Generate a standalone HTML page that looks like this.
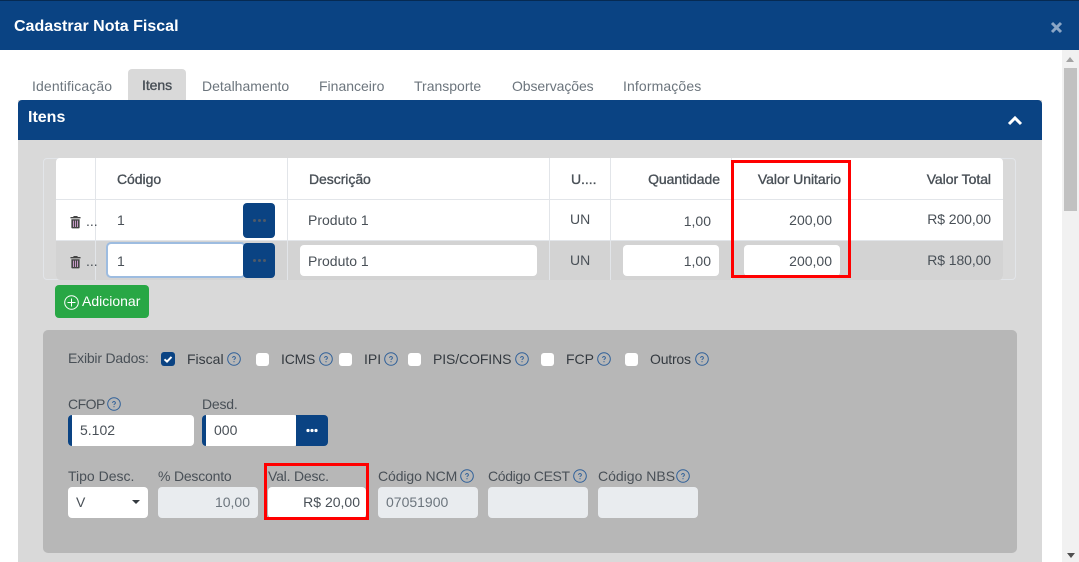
<!DOCTYPE html>
<html><head><meta charset="utf-8">
<style>
html,body{margin:0;padding:0;background:#fff;}
body{width:1079px;height:562px;overflow:hidden;position:relative;font-family:"Liberation Sans",sans-serif;font-size:14px;color:#495057;}
.a{position:absolute;}
.t{position:absolute;white-space:nowrap;line-height:18px;}
.r{text-align:right;}
.b{font-weight:bold;}
.m{-webkit-text-stroke:.35px currentColor;letter-spacing:-.05px;}
.l{letter-spacing:-.2px;}
.tb{letter-spacing:.12px;}
.inp{position:absolute;background:#fff;border-radius:4px;box-sizing:border-box;}
.dis{position:absolute;background:#e9ecef;border-radius:4px;}
.h{position:absolute;width:14px;height:14px;}
.cb{position:absolute;width:13px;height:13px;background:#fff;border-radius:3px;top:353px;}
.vl{position:absolute;width:1px;background:#e2e5e9;top:158px;height:122px;}
.dots{position:absolute;width:32px;height:35px;background:#0a4383;border-radius:4px;}
.dots i{position:absolute;top:16px;width:3px;height:3px;border-radius:50%;background:#4f5a68;}
.bl{position:absolute;width:4px;height:31px;background:#0a4383;border-radius:4px 0 0 4px;}
.rb{position:absolute;border:3px solid #f00;box-sizing:border-box;}
</style></head><body>
<svg width="0" height="0" style="position:absolute"><defs>
<symbol id="q" viewBox="0 0 14 14"><circle cx="7" cy="7" r="6.300" fill="none" stroke="#2f6099" stroke-width="1"/><path d="M5.600 5.900a1.400 1.300 0 1 1 2.200 1c-.5.300-.8.500-.8 1" fill="none" stroke="#2f6099" stroke-width="1"/><circle cx="7" cy="9.700" r=".6" fill="#2f6099"/></symbol>
<symbol id="tr" viewBox="0 0 12 14"><path d="M4 .5h4l.5 1H11.500v1.500H.5V1.500h3z" fill="#444"/><path d="M1.500 4h9v9a1 1 0 0 1-1 1h-7a1 1 0 0 1-1-1z" fill="#444"/><path d="M3.800 5.500v7M6 5.500v7M8.200 5.500v7" stroke="#c79ac7" stroke-width="1.100"/></symbol>
</defs></svg>

<!-- Header -->
<div class="a" style="left:0;top:0;width:1079px;height:50px;background:#0a4383;border-top:1px solid #062a52;box-sizing:border-box;"></div>
<div class="t b" style="left:14px;top:18px;color:#fff;font-size:16px;">Cadastrar Nota Fiscal</div>
<svg class="a" style="left:1050px;top:21px" width="13" height="13" viewBox="0 0 13 13"><path d="M2 2l9 9M11 2l-9 9" stroke="#8ba6c6" stroke-width="3"/></svg>

<!-- Scrollbar -->
<div class="a" style="left:1062px;top:50px;width:17px;height:512px;background:#f1f1f1;"></div>
<div class="a" style="left:1064px;top:68px;width:13px;height:143px;background:#c1c1c1;"></div>
<div class="a" style="left:1066px;top:57px;width:0;height:0;border:4px solid transparent;border-top:0;border-bottom:5px solid #a3a3a3;"></div>
<div class="a" style="left:1067px;top:553px;width:0;height:0;border:4px solid transparent;border-bottom:0;border-top:5px solid #505050;"></div>

<!-- Tabs -->
<div class="a" style="left:128px;top:69px;width:58px;height:31px;background:#d9d9d9;border-radius:4px 4px 0 0;"></div>
<div class="t tb" style="left:32px;top:77px;color:#6c757d;">Identificação</div>
<div class="t m" style="left:142px;top:76px;color:#495057;">Itens</div>
<div class="t" style="left:202px;top:77px;color:#6c757d;">Detalhamento</div>
<div class="t" style="left:319px;top:77px;color:#6c757d;">Financeiro</div>
<div class="t" style="left:414px;top:77px;color:#6c757d;">Transporte</div>
<div class="t" style="left:512px;top:77px;color:#6c757d;letter-spacing:-.08px;">Observações</div>
<div class="t tb" style="left:623px;top:77px;color:#6c757d;">Informações</div>

<!-- Panel -->
<div class="a" style="left:18px;top:100px;width:1024px;height:462px;background:#d9d9d9;"></div>
<div class="a" style="left:18px;top:100px;width:1024px;height:40px;background:#0a4383;border-radius:4px 4px 0 0;"></div>
<div class="t b" style="left:28px;top:109px;color:#fff;font-size:16px;">Itens</div>
<svg class="a" style="left:1007px;top:114px" width="16" height="12" viewBox="0 0 16 12"><path d="M2 10l6-6 6 6" fill="none" stroke="#fff" stroke-width="3"/></svg>

<!-- Table -->
<div class="a" style="left:43px;top:158px;width:973px;height:122px;border:1px solid #e2e5e9;border-radius:4px;box-sizing:border-box;"></div>
<div class="a" style="left:56px;top:158px;width:947px;height:122px;background:#fff;border-radius:4px;"></div>
<div class="a" style="left:56px;top:241px;width:947px;height:39px;background:#d3d3d3;border-radius:0 0 4px 4px;"></div>
<div class="a" style="left:56px;top:199px;width:947px;height:1px;background:#e2e5e9;"></div>
<div class="a" style="left:56px;top:240px;width:947px;height:1px;background:#e2e5e9;"></div>
<div class="vl" style="left:95px"></div>
<div class="vl" style="left:287px"></div>
<div class="vl" style="left:549px"></div>
<div class="vl" style="left:610px"></div>
<div class="vl" style="left:731px"></div>

<div class="t m" style="left:117px;top:170px;">Código</div>
<div class="t m" style="left:309px;top:170px;">Descrição</div>
<div class="t m" style="left:571px;top:170px;">U....</div>
<div class="t m r" style="right:359px;top:170px;">Quantidade</div>
<div class="t m r" style="right:238px;top:170px;">Valor Unitario</div>
<div class="t m r" style="right:88px;top:170px;">Valor Total</div>

<svg class="a" style="left:70px;top:215px" width="11" height="14"><use href="#tr"/></svg>
<svg class="a" style="left:70px;top:255px" width="11" height="14"><use href="#tr"/></svg>
<div class="t" style="left:86px;top:212px;">...</div>
<div class="t" style="left:86px;top:252px;">...</div>

<div class="t" style="left:117px;top:211px;">1</div>
<div class="dots" style="left:243px;top:203px"><i style="left:10px"></i><i style="left:15px"></i><i style="left:20px"></i></div>
<div class="t" style="left:308px;top:211px;">Produto 1</div>
<div class="t" style="left:570px;top:210px;">UN</div>
<div class="t r" style="right:368px;top:212px;">1,00</div>
<div class="t r" style="right:247px;top:211px;">200,00</div>
<div class="t r" style="right:88px;top:210px;letter-spacing:-.1px;">R$ 200,00</div>

<div class="inp" style="left:106px;top:242px;width:140px;height:36px;border:2px solid #9dbce0;border-radius:5px;"></div>
<div class="t" style="left:117px;top:252px;">1</div>
<div class="dots" style="left:243px;top:243px"><i style="left:10px"></i><i style="left:15px"></i><i style="left:20px"></i></div>
<div class="inp" style="left:300px;top:245px;width:237px;height:31px;"></div>
<div class="t" style="left:308px;top:252px;">Produto 1</div>
<div class="t" style="left:570px;top:251px;">UN</div>
<div class="inp" style="left:623px;top:245px;width:96px;height:31px;"></div>
<div class="t r" style="right:368px;top:252px;">1,00</div>
<div class="inp" style="left:744px;top:245px;width:96px;height:31px;"></div>
<div class="t r" style="right:247px;top:252px;">200,00</div>
<div class="t r" style="right:88px;top:251px;letter-spacing:-.1px;">R$ 180,00</div>

<div class="rb" style="left:731px;top:160px;width:120px;height:118px;"></div>

<!-- Add button -->
<div class="a" style="left:55px;top:285px;width:94px;height:33px;background:#28a745;border-radius:4px;"></div>
<svg class="a" style="left:64px;top:295px" width="15" height="15" viewBox="0 0 15 15"><circle cx="7.500" cy="7.500" r="6.800" fill="none" stroke="#fff"/><path d="M7.500 3.500v8M3.500 7.500h8" stroke="#fff"/></svg>
<div class="t" style="left:82px;top:292px;color:#fff;">Adicionar</div>

<!-- Gray section -->
<div class="a" style="left:43px;top:330px;width:974px;height:223px;background:#b7b7b7;border-radius:5px;"></div>
<div class="t l" style="left:68px;top:349px;">Exibir Dados:</div>
<div class="cb" style="left:161px;top:352px;width:14px;height:14px;background:#0a4383;"></div>
<svg class="a" style="left:161px;top:352px" width="14" height="14" viewBox="0 0 14 14"><path d="M3.500 7.300l2.500 2.300 4.500-4.700" fill="none" stroke="#fff" stroke-width="2"/></svg>
<div class="t" style="left:187px;top:350px;color:#343a40;">Fiscal</div>
<svg class="h" style="left:227px;top:352px"><use href="#q"/></svg>
<div class="cb" style="left:256px"></div>
<div class="t l" style="left:281px;top:350px;color:#343a40;">ICMS</div>
<svg class="h" style="left:319px;top:352px"><use href="#q"/></svg>
<div class="cb" style="left:339px"></div>
<div class="t" style="left:364px;top:350px;color:#343a40;">IPI</div>
<svg class="h" style="left:384px;top:352px"><use href="#q"/></svg>
<div class="cb" style="left:408px"></div>
<div class="t" style="left:433px;top:350px;color:#343a40;letter-spacing:-.1px;">PIS/COFINS</div>
<svg class="h" style="left:515px;top:352px"><use href="#q"/></svg>
<div class="cb" style="left:541px"></div>
<div class="t" style="left:566px;top:350px;color:#343a40;">FCP</div>
<svg class="h" style="left:597px;top:352px"><use href="#q"/></svg>
<div class="cb" style="left:625px"></div>
<div class="t l" style="left:650px;top:350px;color:#343a40;">Outros</div>
<svg class="h" style="left:695px;top:352px"><use href="#q"/></svg>

<div class="t" style="left:68px;top:395px;letter-spacing:-.5px;">CFOP</div>
<svg class="h" style="left:107px;top:397px"><use href="#q"/></svg>
<div class="inp" style="left:68px;top:415px;width:126px;height:31px;"></div>
<div class="bl" style="left:68px;top:415px"></div>
<div class="t" style="left:80px;top:421px;">5.102</div>

<div class="t l" style="left:202px;top:395px;">Desd.</div>
<div class="inp" style="left:202px;top:415px;width:96px;height:31px;"></div>
<div class="bl" style="left:202px;top:415px"></div>
<div class="t" style="left:214px;top:421px;">000</div>
<div class="a" style="left:296px;top:415px;width:32px;height:31px;background:#0a4383;border-radius:0 4px 4px 0;"></div>
<svg class="a" style="left:306px;top:428px" width="12" height="5"><circle cx="2" cy="2.500" r="1.600" fill="#fff"/><circle cx="6" cy="2.500" r="1.600" fill="#fff"/><circle cx="10" cy="2.500" r="1.600" fill="#fff"/></svg>

<div class="t" style="left:68px;top:467px;">Tipo Desc.</div>
<div class="inp" style="left:68px;top:487px;width:80px;height:31px;"></div>
<div class="t" style="left:76px;top:493px;">V</div>
<div class="a" style="left:132px;top:500px;width:0;height:0;border:4px solid transparent;border-bottom:0;border-top:4px solid #343a40;"></div>

<div class="t l" style="left:158px;top:467px;">% Desconto</div>
<div class="dis" style="left:158px;top:487px;width:100px;height:31px;"></div>
<div class="t r" style="right:829px;top:493px;color:#6c757d;">10,00</div>

<div class="inp" style="left:268px;top:487px;width:98px;height:31px;"></div>
<div class="t l" style="left:268px;top:467px;">Val. Desc.</div>
<div class="t r" style="right:719px;top:493px;">R$ 20,00</div>
<div class="rb" style="left:264px;top:463px;width:105px;height:57px;"></div>

<div class="t" style="left:378px;top:467px;letter-spacing:-.1px;">Código NCM</div>
<svg class="h" style="left:460px;top:469px"><use href="#q"/></svg>
<div class="dis" style="left:378px;top:487px;width:100px;height:31px;"></div>
<div class="t" style="left:386px;top:493px;color:#6c757d;">07051900</div>

<div class="t" style="left:488px;top:467px;letter-spacing:-.35px;">Código CEST</div>
<svg class="h" style="left:573px;top:469px"><use href="#q"/></svg>
<div class="dis" style="left:488px;top:487px;width:100px;height:31px;"></div>

<div class="t" style="left:598px;top:467px;">Código NBS</div>
<svg class="h" style="left:676px;top:469px"><use href="#q"/></svg>
<div class="dis" style="left:598px;top:487px;width:100px;height:31px;"></div>
</body></html>
